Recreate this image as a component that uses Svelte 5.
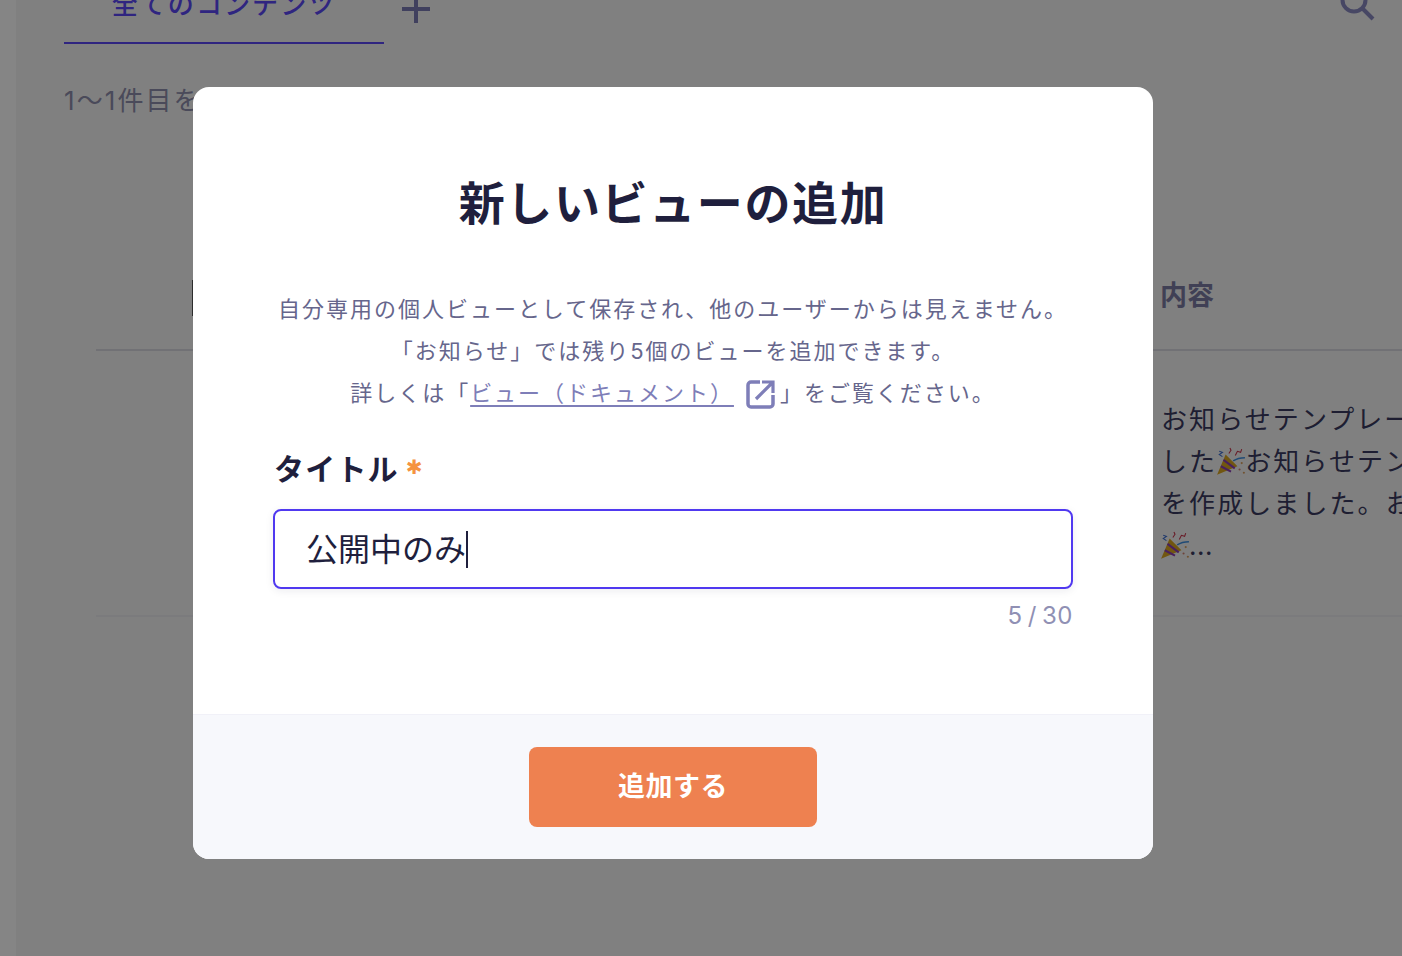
<script>
  const lines = ['自分専用の個人ビューとして保存され、他のユーザーからは見えません。', '「お知らせ」では残り5個のビューを追加できます。'];
</script>

{#snippet popper()}
  <svg class="popper" viewBox="0 0 28 28" aria-hidden="true">
    <path d="M1 26 L9 7 L20 18 Z" fill="#d9a520"/>
    <path d="M4.500 18 L14 23 M7 12 L17.500 20" stroke="#8a3fb5" stroke-width="2"/>
    <path d="M16 13 C19 11 23 10 27 10" stroke="#3f8fe0" stroke-width="1.500" fill="none"/>
    <path d="M12 6 L14 3 L13 1 M18 8 L20 4 L23 5 L24 2" stroke="#c8334a" stroke-width="1" fill="none"/>
    <path d="M3 4 L6 5 L3 7 L6 9" stroke="#3f6fd0" stroke-width="1" fill="none"/>
    <circle cx="24" cy="15" r="1" fill="#d9a060"/><circle cx="22" cy="21" r="1" fill="#d08070"/><circle cx="26" cy="24" r="1" fill="#d9a060"/>
  </svg>
{/snippet}

<div class="page">
  <div class="rail"></div>
  <main class="main">
    <div class="tabbar">
      <div class="tab">全てのコンテンツ</div>
      <svg class="plus" viewBox="0 0 30 30" aria-hidden="true"><path d="M15 1V29M1 15H29" stroke="currentColor" stroke-width="4"/></svg>
      <svg class="search" viewBox="0 0 36 36" aria-hidden="true"><circle cx="15" cy="15" r="11.500" fill="none" stroke="currentColor" stroke-width="4"/><path d="M23 23L34 34" stroke="currentColor" stroke-width="4"/></svg>
    </div>
    <p class="count">1〜1件目を表示</p>
    <div class="table">
      <div class="thead">
        <span class="peek"></span>
        <span class="th">内容</span>
      </div>
      <div class="tr">
        <div class="td">
          お知らせテンプレートを作成しま<br>
          した{@render popper()}お知らせテンプレート<br>
          を作成しました。お知らせ<br>
          {@render popper()}<span class="dots">...</span>
        </div>
      </div>
    </div>
  </main>

  <div class="overlay">
    <div class="modal">
      <div class="body">
        <h1>新しいビューの追加</h1>
        <div class="desc">
          {#each lines as line}<div>{line}</div>{/each}
          <div class="linkline">詳しくは「<a href="#top">ビュー（ドキュメント）</a><svg class="ext" viewBox="0 0 30 30" aria-hidden="true"><path d="M14 3H5a3 3 0 0 0-3 3v19a3 3 0 0 0 3 3h19a3 3 0 0 0 3-3v-9" fill="none" stroke="currentColor" stroke-width="3.500"/><path d="M10 20L26 4M16 3H27V14" fill="none" stroke="currentColor" stroke-width="3.200"/></svg>」をご覧ください。</div>
        </div>
        <div class="label">タイトル<span class="req">✱</span></div>
        <div class="field"><span class="value">公開中のみ</span><span class="caret"></span></div>
        <div class="counter">5 / 30</div>
      </div>
      <div class="foot">
        <button class="add">追加する</button>
      </div>
    </div>
  </div>
</div>

<style>
  :global(body) {
    margin: 0;
    overflow: hidden;
    font-family: Inter, "Noto Sans CJK JP", sans-serif;
  }
  .page {
    position: relative;
    display: flex;
    width: 1402px;
    height: 956px;
    overflow: hidden;
    background: #f6f6f6;
  }
  .rail {
    width: 16px;
    flex: none;
    background: #ffffff;
  }
  .main {
    flex: 1;
    min-width: 0;
    padding-left: 48px;
    color: #1a1a3a;
  }
  .tabbar {
    display: flex;
    align-items: flex-start;
    height: 64px;
    margin-top: -20px;
  }
  .tab {
    box-sizing: border-box;
    width: 320px;
    height: 64px;
    text-align: center;
    font-size: 26px;
    font-weight: 500;
    line-height: 50px;
    letter-spacing: 0.08em;
    color: #5a48f5;
    border-bottom: 2px solid #5a48f5;
  }
  .plus {
    width: 30px;
    height: 30px;
    margin: 14px 0 0 17px;
    color: #7c7cb4;
  }
  .search {
    width: 36px;
    height: 36px;
    margin: 5px 27px 0 auto;
    color: #8888c0;
  }
  .count {
    margin: 0;
    padding-top: 36px;
    font-size: 26px;
    line-height: 42px;
    color: #8e8eac;
    letter-spacing: 0.08em;
    white-space: nowrap;
  }
  .table {
    margin: 0 0 0 32px;
  }
  .thead {
    box-sizing: border-box;
    display: flex;
    align-items: flex-start;
    height: 102px;
    margin-top: 127px;
    padding-left: 96px;
    border-bottom: 2px solid #d8d8e0;
  }
  .peek {
    width: 3px;
    height: 36px;
    margin-top: 31px;
    background: #555;
  }
  .th {
    margin-left: 965px;
    margin-top: 26px;
    font-size: 27px;
    line-height: 42px;
    font-weight: 700;
    color: #7c7ca4;
  }
  .tr {
    box-sizing: border-box;
    height: 266px;
    padding: 48px 0 0 1065px;
    border-bottom: 2px solid #ececf0;
  }
  .td {
    font-size: 26px;
    line-height: 42px;
    letter-spacing: 0.08em;
    white-space: nowrap;
    color: #3a3a60;
  }
  .dots {
    letter-spacing: 0.02em;
  }
  .popper {
    width: 30px;
    height: 30px;
    margin: 0 -1px;
    vertical-align: -6px;
  }
  .overlay {
    position: absolute;
    inset: 0;
    background: rgba(0, 0, 0, 0.48);
  }
  .modal {
    position: absolute;
    left: 193px;
    top: 87px;
    width: 960px;
    height: 772px;
    display: flex;
    flex-direction: column;
    overflow: hidden;
    background: #fff;
    border-radius: 16px;
  }
  .body {
    flex: 1;
    padding: 83px 80px 0;
  }
  h1 {
    margin: 0;
    font-size: 46px;
    line-height: 66px;
    font-weight: 700;
    letter-spacing: 0.035em;
    text-align: center;
    color: #1f1f3d;
  }
  .desc {
    margin-top: 52px;
    font-size: 22px;
    line-height: 42px;
    letter-spacing: 0.09em;
    text-align: center;
    color: #66668c;
  }
  .linkline {
    white-space: nowrap;
  }
  .desc a {
    color: #7e7eb8;
    text-decoration: underline;
    text-decoration-thickness: 2px;
    text-underline-offset: 4px;
  }
  .ext {
    width: 30px;
    height: 30px;
    margin: 0 4px 0 12px;
    vertical-align: -8px;
    color: #7e7eb8;
  }
  .label {
    display: flex;
    align-items: center;
    margin-top: 34px;
    padding-left: 1px;
    font-size: 30px;
    line-height: 42px;
    font-weight: 700;
    letter-spacing: 0.04em;
    color: #1f1f3d;
  }
  .req {
    margin: -5px 0 0 7px;
    font-family: "DejaVu Sans", sans-serif;
    font-size: 20px;
    line-height: 20px;
    font-weight: 700;
    color: #f59340;
  }
  .field {
    display: flex;
    align-items: center;
    box-sizing: border-box;
    height: 80px;
    margin-top: 19px;
    padding-left: 31px;
    border: 2px solid #5039f0;
    border-radius: 8px;
    box-shadow: 0 2px 8px rgba(30, 30, 60, 0.08);
    font-size: 32px;
    color: #1f1f3d;
  }
  .value {
    margin-top: -5px;
  }
  .caret {
    width: 2px;
    height: 37px;
    margin-left: 0;
    background: #1f1f3d;
  }
  .counter {
    margin-top: 9px;
    text-align: right;
    font-size: 24px;
    line-height: 36px;
    letter-spacing: 0.02em;
    word-spacing: -2px;
    color: #9090b4;
  }
  .foot {
    display: flex;
    justify-content: center;
    box-sizing: border-box;
    height: 145px;
    padding-top: 32px;
    background: #f7f8fc;
    border-top: 1px solid #f1f1f8;
  }
  .add {
    width: 288px;
    height: 80px;
    padding: 0 0 5px;
    border: 0;
    border-radius: 8px;
    background: #ee8150;
    color: #fff;
    font: inherit;
    font-size: 27px;
    font-weight: 700;
    letter-spacing: 0.02em;
  }
</style>
